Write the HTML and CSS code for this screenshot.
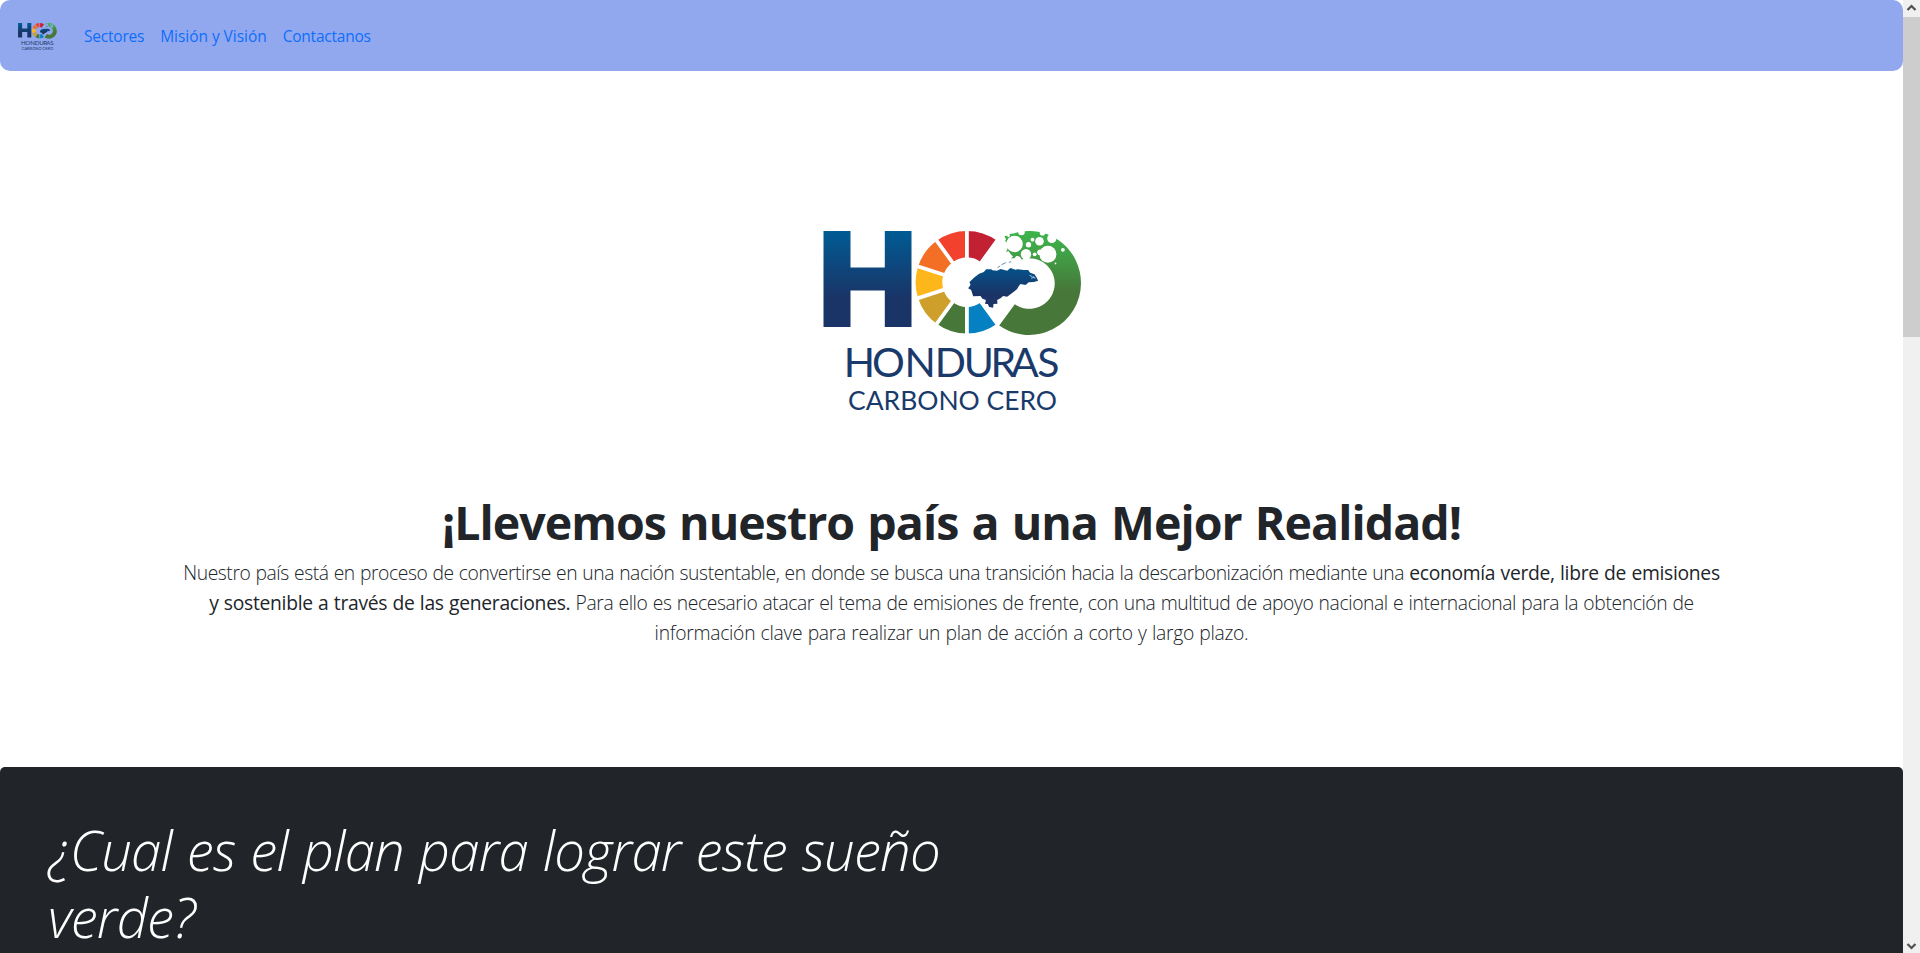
FILE: index.html
```
<!DOCTYPE html>
<html lang="es">
<head>
<meta charset="utf-8">
<title>Honduras Carbono Cero</title>
<link rel="stylesheet" href="styles.css">
</head>
<body>
<svg class="defs" width="0" height="0" aria-hidden="true">
  <defs>
    <linearGradient id="blue" gradientUnits="userSpaceOnUse" x1="0" y1="231" x2="0" y2="327">
      <stop offset="0" stop-color="#005b94"/><stop offset=".7" stop-color="#1a3467"/><stop offset="1" stop-color="#1a3467"/>
    </linearGradient>
    <linearGradient id="mapblue" x1="0" y1="0" x2="0" y2="1">
      <stop offset="0" stop-color="#04528a"/><stop offset=".65" stop-color="#1a3467"/>
    </linearGradient>
    <linearGradient id="green" gradientUnits="userSpaceOnUse" x1="0" y1="231" x2="0" y2="290">
      <stop offset="0" stop-color="#3cb54a"/><stop offset=".35" stop-color="#40a346"/><stop offset="1" stop-color="#47783a"/>
    </linearGradient>
    <mask id="gaps" maskUnits="userSpaceOnUse" x="900" y="220" width="110" height="130">
      <rect x="900" y="220" width="110" height="130" fill="#fff"/>
      <g stroke="#000" stroke-width="3.8">
        <path d="M966.4 220V345M966.4 282.3L931.1 233.7M966.4 282.3L909.3 263.7M966.4 282.3L909.3 300.9M966.4 282.3L931.1 330.9M966.4 282.3L1004 334M966.4 282.3L1004 230.6"/>
      </g>
    </mask>
    <mask id="bubbles" maskUnits="userSpaceOnUse" x="990" y="225" width="100" height="115">
      <rect x="990" y="225" width="100" height="115" fill="#fff"/>
      <circle cx="1014" cy="244" r="8.3"/><circle cx="1039" cy="241.3" r="4.3"/><circle cx="1028" cy="244.8" r="2.7"/>
      <circle cx="1032" cy="239.7" r="1.9"/><circle cx="1025.5" cy="254.3" r="5.2"/><circle cx="1034.2" cy="254.3" r="1.9"/>
      <circle cx="1047.4" cy="254.2" r="8.5"/><circle cx="1039.6" cy="252.3" r="2.9"/><circle cx="1062.4" cy="249.8" r="1.9"/>
      <circle cx="1055" cy="263.4" r=".9"/><circle cx="1051.3" cy="238.5" r="4.6"/><circle cx="1021" cy="232" r="3.3"/>
      <circle cx="1042" cy="232.7" r="2.8"/><circle cx="1008" cy="236" r="1.2"/><circle cx="1017" cy="258.5" r="2.5"/>
    </mask>
    <symbol id="logo" viewBox="801.5 200 300 220">
      <path fill="url(#blue)" d="M823 231h27v36.5h34.300V231H911v96h-26.700v-36.500H850V327h-27z"/>
      <g mask="url(#gaps)">
        <path fill="#c22033" d="M966.400 231A51.300 51.300 0 0 1 996.550 240.800L980.800 262.400A24.500 24.500 0 0 0 966.400 257.300z"/>
        <path fill="#f2412d" d="M966.400 231A51.300 51.300 0 0 0 936.250 240.800L952 262.500A24.500 24.500 0 0 1 966.400 257.300z"/>
        <path fill="#f36f26" d="M936.250 240.800A51.300 51.300 0 0 0 917.600 266.450L943 274.700A25 25 0 0 1 952 262.500z"/>
        <path fill="#fdb71a" d="M917.600 266.450A51.300 51.300 0 0 0 917.600 298.150L943 289.900A24.500 24.500 0 0 1 943 274.700z"/>
        <path fill="#cf9f2c" d="M917.600 298.150A51.300 51.300 0 0 0 936.250 323.800L952 302.100A24.500 24.500 0 0 1 943 289.900z"/>
        <path fill="#47783a" d="M936.250 323.800A51.300 51.300 0 0 0 966.400 333.600V307.300A24.500 24.500 0 0 1 952 302.100z"/>
        <path fill="#0480c3" d="M966.400 333.600A51.300 51.300 0 0 0 996.550 323.800L980.800 302.100A24.500 24.500 0 0 1 966.400 307.300z"/>
      </g>
      <path mask="url(#bubbles)" fill="url(#green)" d="M998.700 325.600A52 52 0 0 0 1080.500 283A52 52 0 0 0 1019 231.800L1013 233.400 1009 234 1009.500 235.500 1004 236 1005.500 239.500 1004.500 241 1008 244 1007 249 1005.500 252 1008 251 1010 254 1012.500 256.500 1010.500 258.500 1014.500 258 1016 256 1020 257.500 1021 259.500A25.300 25.300 0 1 1 1014.300 304.200z"/>
      <g transform="translate(900 220) scale(.3333)">
        <path fill="url(#mapblue)" d="M203 205L210 195 207 186 222 172 236 161 250 156 257 148 272 148 276 151 290 152 300 147 312 150 320 152 330 144 345 149 352 148 370 150 383 150 389 158 402 163 408 172 413 182 400 186 385 187 375 195 360 192 355 198 350 207 343 213 330 223 320 230 308 228 300 235 290 240 291 251 279 252 278 263 266 261 262 252 254 252 256 240 246 236 240 228 218 229 212 210z"/>
        <path fill="none" stroke="#a9c6de" stroke-width="3" d="M387 166l9 4M392 175l9-3M399 169l5 7"/>
        <path fill="none" stroke="#17558b" stroke-width="2" d="M291 143l8-5M303 134l13-6M325 127l7-2"/>
      </g>
      <text class="logo-name" x="843.2 871.500 904 934.300 963.200 990 1010.500 1036.800" y="377">HONDURAS</text>
      <text class="logo-sub" x="847.500" y="409.600" textLength="209" lengthAdjust="spacingAndGlyphs">CARBONO CERO</text>
    </symbol>
  </defs>
</svg>
<div class="window">
  <div class="page">
    <nav class="navbar">
      <svg class="brand" viewBox="823 231 258 179"><use href="#logo" x="801.500" y="200" width="300" height="220"/></svg>
      <a class="link" href="#sectores">Sectores</a>
      <a class="link link-wide" href="#mision">Misión y Visión</a>
      <a class="link" href="#contacto">Contactanos</a>
    </nav>
    <main class="hero">
      <svg class="hero-logo" viewBox="0 0 300 220"><use href="#logo" width="300" height="220"/></svg>
      <h1>¡Llevemos nuestro país a una Mejor Realidad!</h1>
      <p class="lead">
        <span class="line"><span class="l1">Nuestro país está en proceso de convertirse en una nación sustentable, en donde se busca una transición hacia la descarbonización mediante una </span><strong class="s1">economía verde, libre de emisiones</strong></span>
        <span class="line"><strong class="s2">y sostenible a través de las generaciones.</strong><span class="l2"> Para ello es necesario atacar el tema de emisiones de frente, con una multitud de apoyo nacional e internacional para la obtención de</span></span>
        <span class="line l3">información clave para realizar un plan de acción a corto y largo plazo.</span>
      </p>
    </main>
    <section class="plan">
      <h2>¿Cual es el plan para lograr este sueño<br>verde?</h2>
    </section>
  </div>
  <div class="scrollbar">
    <svg class="arrow" viewBox="0 0 17 17"><path d="M4.500 10L8.500 6l4 4"/></svg>
    <div class="thumb"></div>
    <svg class="arrow arrow-down" viewBox="0 0 17 17"><path d="M4.500 8l4 4 4-4"/></svg>
  </div>
</div>
</body>
</html>
```
FILE: styles.css
```
* { box-sizing: border-box; }
body {
  margin: 0;
  overflow: hidden;
  background: #fff;
  color: #212529;
  font: 400 16px/1.5 "Open Sans", "Noto Sans", sans-serif;
}
.defs { display: block; width: 0; height: 0; }
.window { display: flex; height: 953px; overflow: hidden; }
.page { flex: 1; display: flex; flex-direction: column; min-width: 0; }

.navbar {
  display: flex;
  align-items: center;
  flex: none;
  height: 71px;
  padding: 1px 18px 0;
  border-radius: 10px;
  background: #92a8ee;
}
.brand { width: 39px; height: 27px; margin-right: 27px; }
.link {
  margin-right: 16px;
  padding-top: 2px;
  color: #0d6efd;
  font-size: 15.500px;
  letter-spacing: -.22px;
  text-decoration: none;
  white-space: nowrap;
}
.link-wide { letter-spacing: -.04px; }

.hero {
  display: flex;
  flex-direction: column;
  align-items: center;
  flex: none;
  height: 696px;
  padding-top: 129px;
}
.hero-logo { width: 300px; height: 220px; flex: none; }
h1 {
  margin: 74px 0 6px;
  font-size: 46.500px;
  font-weight: 700;
  line-height: 57.600px;
  letter-spacing: -.960px;
  word-spacing: 2px;
  white-space: nowrap;
}
.lead {
  margin: 0;
  font-size: 19.300px;
  font-weight: 300;
  line-height: 30px;
  text-align: center;
  word-spacing: .600px;
}
.line { display: block; white-space: nowrap; }
.lead strong { font-weight: 400; }
.l1 { letter-spacing: -.430px; }
.s1 { letter-spacing: -.300px; }
.s2 { letter-spacing: -.295px; }
.l2 { letter-spacing: -.390px; }
.l3 { letter-spacing: -.283px; }

.plan {
  flex: none;
  height: 420px;
  padding: 50px 48px;
  border-radius: 5px;
  background: #212529;
  color: #fff;
}
h2 {
  margin: 0;
  font-size: 54.500px;
  font-style: italic;
  font-weight: 300;
  line-height: 67.200px;
  letter-spacing: -.800px;
  word-spacing: 1.500px;
  white-space: nowrap;
}

.scrollbar { display: flex; flex-direction: column; flex: none; width: 17px; background: #f0f0f0; }
.thumb { height: 320px; background: #cdcdcd; }
.arrow { width: 17px; height: 17px; fill: none; stroke: #505050; stroke-width: 2.200; }
.arrow-down { margin-top: auto; }

.logo-name { font: 400 41px Lato, sans-serif; fill: #1a3a6c; }
.logo-sub { font: 400 27.500px Lato, sans-serif; fill: #1a3a6c; }
```
